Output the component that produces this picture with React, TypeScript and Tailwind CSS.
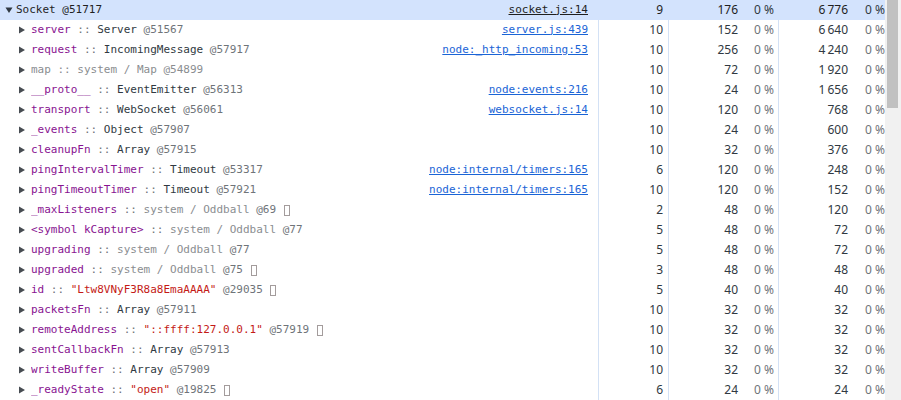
import React from "react";

type Part = { t: string; c: string };
type Row = {
  parts: Part[];
  box?: boolean;
  link?: string;
  dist: string;
  shallow: string;
  retained: string;
};

const P = "text-[#881391]"; // property
const SEP = "text-[#6f7479]";
const CLS = "text-[#303942]";
const ID = "text-[#6f7479]";
const SYS = "text-[#8a8d90]";
const STR = "text-[#c41a16]";
const DIM = "text-[#8a8d90]";

const prop = (name: string, cls: string, id: string, clsColor = CLS): Part[] => [
  { t: name, c: P },
  { t: " :: ", c: SEP },
  { t: cls, c: clsColor },
  { t: " " + id, c: ID },
];

const rows: Row[] = [
  { parts: prop("server", "Server", "@51567"), link: "server.js:439", dist: "10", shallow: "152", retained: "6\u202f640" },
  { parts: prop("request", "IncomingMessage", "@57917"), link: "node:_http_incoming:53", dist: "10", shallow: "256", retained: "4\u202f240" },
  { parts: [{ t: "map :: system / Map @54899", c: DIM }], dist: "10", shallow: "72", retained: "1\u202f920" },
  { parts: prop("__proto__", "EventEmitter", "@56313"), link: "node:events:216", dist: "10", shallow: "24", retained: "1\u202f656" },
  { parts: prop("transport", "WebSocket", "@56061"), link: "websocket.js:14", dist: "10", shallow: "120", retained: "768" },
  { parts: prop("_events", "Object", "@57907"), dist: "10", shallow: "24", retained: "600" },
  { parts: prop("cleanupFn", "Array", "@57915"), dist: "10", shallow: "32", retained: "376" },
  { parts: prop("pingIntervalTimer", "Timeout", "@53317"), link: "node:internal/timers:165", dist: "6", shallow: "120", retained: "248" },
  { parts: prop("pingTimeoutTimer", "Timeout", "@57921"), link: "node:internal/timers:165", dist: "10", shallow: "120", retained: "152" },
  { parts: prop("_maxListeners", "system / Oddball", "@69", SYS), box: true, dist: "2", shallow: "48", retained: "120" },
  { parts: prop("<symbol kCapture>", "system / Oddball", "@77", SYS), dist: "5", shallow: "48", retained: "72" },
  { parts: prop("upgrading", "system / Oddball", "@77", SYS), dist: "5", shallow: "48", retained: "72" },
  { parts: prop("upgraded", "system / Oddball", "@75", SYS), box: true, dist: "3", shallow: "48", retained: "48" },
  { parts: prop("id", "\"Ltw8VNyF3R8a8EmaAAAA\"", "@29035", STR), box: true, dist: "5", shallow: "40", retained: "40" },
  { parts: prop("packetsFn", "Array", "@57911"), dist: "10", shallow: "32", retained: "32" },
  { parts: prop("remoteAddress", "\"::ffff:127.0.0.1\"", "@57919", STR), box: true, dist: "10", shallow: "32", retained: "32" },
  { parts: prop("sentCallbackFn", "Array", "@57913"), dist: "10", shallow: "32", retained: "32" },
  { parts: prop("writeBuffer", "Array", "@57909"), dist: "10", shallow: "32", retained: "32" },
  { parts: prop("_readyState", "\"open\"", "@19825", STR), box: true, dist: "6", shallow: "24", retained: "24" },
];

const mono = { fontFamily: "'DejaVu Sans Mono', monospace" };

function Tri({ down }: { down?: boolean }) {
  return down ? (
    <svg width="8" height="6" viewBox="0 0 8 6" className="shrink-0">
      <polygon points="0.5,0.5 7.5,0.5 4,6" fill="#303942" />
    </svg>
  ) : (
    <svg width="6" height="8" viewBox="0 0 6 8" className="shrink-0">
      <polygon points="0,0.5 6,4 0,7.5" fill="#474c52" />
    </svg>
  );
}

function NumCells({ dist, shallow, retained, selected }: { dist: string; shallow: string; retained: string; selected?: boolean }) {
  const line = selected ? "border-transparent" : "border-[#d3e1f5]";
  const pct = selected ? "text-[#303942]" : "text-[#6f7479]";
  return (
    <>
      <div className={`w-[70px] h-full border-l ${line} flex items-center justify-end pr-[5px]`}>{dist}</div>
      <div className={`w-[110px] h-full border-l ${line} flex items-center`}>
        <div className="w-[69px] text-right">{shallow}</div>
        <div className={`w-[36px] text-right ${pct}`}>0&nbsp;%</div>
      </div>
      <div className={`w-[107px] h-full border-l ${line} flex items-center`}>
        <div className="w-[69px] text-right">{retained}</div>
        <div className={`w-[37px] text-right ${pct}`}>0&nbsp;%</div>
      </div>
    </>
  );
}

export default function App() {
  return (
    <div
      className="w-[901px] h-[400px] flex overflow-hidden bg-white text-[#303942] text-[12px]"
      style={{ fontFamily: "'Noto Sans', sans-serif" }}
    >
      <div className="w-[885px] flex flex-col overflow-hidden">
        <div className="h-[20px] flex items-center bg-[#d3e3fd] text-[#1f1f1f] shrink-0">
          <div className="w-[598px] h-full flex items-center text-[11px]" style={mono}>
            <div className="pl-[5px] pr-[3px] flex items-center">
              <Tri down />
            </div>
            <div className="flex-1 whitespace-pre">Socket @51717</div>
            <a className="pr-[10px] underline text-[#1f1f1f]">socket.js:14</a>
          </div>
          <NumCells dist="9" shallow="176" retained={"6\u202f776"} selected />
        </div>
        {rows.map((r, i) => (
          <div key={i} className="h-[20px] flex items-center shrink-0">
            <div className="w-[598px] h-full flex items-center text-[11px] overflow-hidden" style={mono}>
              <div className="pl-[19px] pr-[6px] flex items-center">
                <Tri />
              </div>
              <div className="flex-1 whitespace-pre overflow-hidden flex items-center">
                {r.parts.map((p, j) => (
                  <span key={j} className={p.c}>
                    {p.t}
                  </span>
                ))}
                {r.box && (
                  <>
                    <span> </span>
                    <span className="inline-block w-[6px] h-[11px] border border-[#a39c9c] ml-[1px]" />
                  </>
                )}
              </div>
              {r.link && <a className="pr-[10px] underline text-[#1a64d6]">{r.link}</a>}
            </div>
            <NumCells dist={r.dist} shallow={r.shallow} retained={r.retained} />
          </div>
        ))}
      </div>
      <div className="w-[16px] h-full bg-[#f1f1f1] pl-[2px] pr-[3px] shrink-0">
        <div className="w-[11px] h-[108px] bg-[#c1c1c1]" />
      </div>
    </div>
  );
}
